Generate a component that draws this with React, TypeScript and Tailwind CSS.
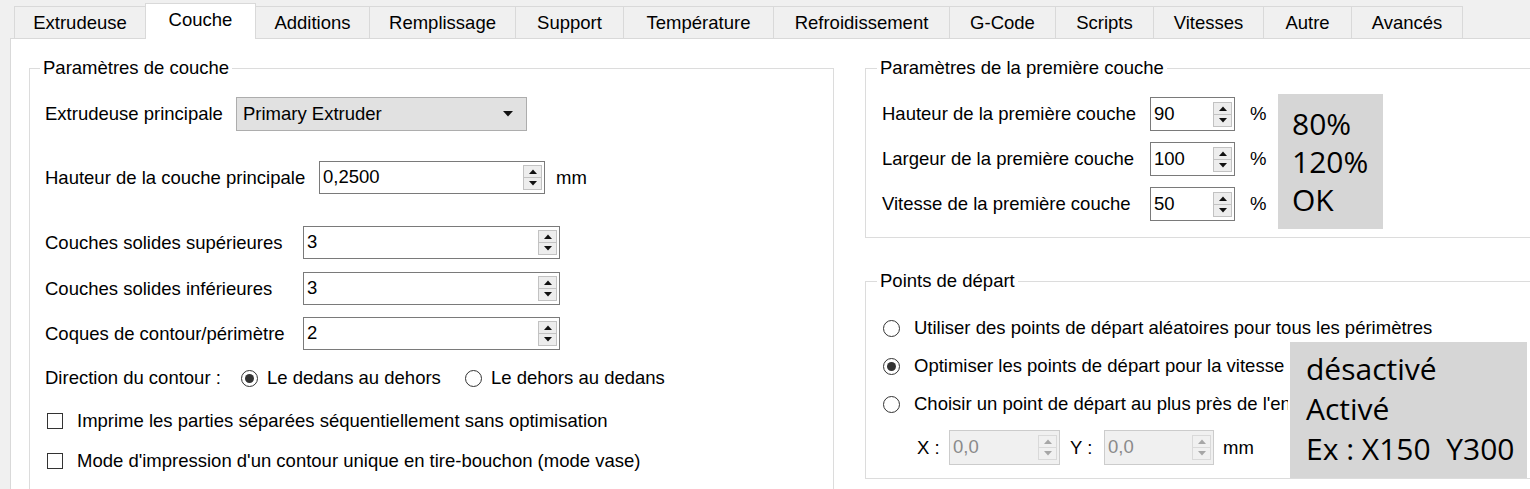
import React from "react";

const tabs: { label: string; w: string; active?: boolean }[] = [
  { label: "Extrudeuse", w: "w-[132px]" },
  { label: "Couche", w: "w-[111px]", active: true },
  { label: "Additions", w: "w-[115px]" },
  { label: "Remplissage", w: "w-[147px]" },
  { label: "Support", w: "w-[109px]" },
  { label: "Température", w: "w-[151px]" },
  { label: "Refroidissement", w: "w-[177px]" },
  { label: "G-Code", w: "w-[107px]" },
  { label: "Scripts", w: "w-[99px]" },
  { label: "Vitesses", w: "w-[111px]" },
  { label: "Autre", w: "w-[89px]" },
  { label: "Avancés", w: "w-[112px]" },
];

function UpArrow({ color }: { color: string }) {
  return (
    <svg width="8" height="5" viewBox="0 0 8 5">
      <path d="M0 5 L4 0.5 L8 5 Z" fill={color} />
    </svg>
  );
}

function DownArrow({ color }: { color: string }) {
  return (
    <svg width="8" height="5" viewBox="0 0 8 5">
      <path d="M0 0 L8 0 L4 4.5 Z" fill={color} />
    </svg>
  );
}

function Spin({
  w,
  h,
  value,
  disabled,
}: {
  w: string;
  h: string;
  value: string;
  disabled?: boolean;
}) {
  return (
    <div
      className={`${w} ${h} shrink-0 flex items-center border ${
        disabled
          ? "border-[#cccccc] bg-[#f0f0f0] text-[#8a8a8a]"
          : "border-[#7a7a7a] bg-white text-black"
      }`}
    >
      <span className="flex-1 pl-[3px] leading-none whitespace-nowrap">{value}</span>
      <div
        className={`w-[19px] h-[25px] mr-[2px] flex flex-col border ${
          disabled ? "border-[#d9d9d9] bg-[#f0f0f0]" : "border-[#c2c2c2] bg-[#ededed]"
        }`}
      >
        <div
          className={`flex-1 flex items-center justify-center border-b ${
            disabled ? "border-[#d9d9d9]" : "border-[#c2c2c2]"
          }`}
        >
          <UpArrow color={disabled ? "#a6a6a6" : "#111111"} />
        </div>
        <div className="flex-1 flex items-center justify-center">
          <DownArrow color={disabled ? "#a6a6a6" : "#111111"} />
        </div>
      </div>
    </div>
  );
}

function Radio({ checked }: { checked?: boolean }) {
  return (
    <span className="w-[17px] h-[17px] shrink-0 rounded-full border border-[#333333] bg-white flex items-center justify-center">
      {checked && <span className="w-[9px] h-[9px] rounded-full bg-[#333333]" />}
    </span>
  );
}

function Checkbox() {
  return <span className="w-[16px] h-[16px] shrink-0 border border-[#333333] bg-white" />;
}

export default function App() {
  return (
    <div className="relative w-[1530px] h-[489px] overflow-hidden bg-[#f0f0f0] text-black font-['Liberation_Sans',Arial,sans-serif] text-[18.5px]">
      {/* Tab bar */}
      <div className="flex items-end h-[38px] pl-[14px]">
        {tabs.map((t, i) => (
          <div
            key={t.label}
            className={`${t.w} shrink-0 flex items-center justify-center border-l border-t border-r border-[#d9d9d9] whitespace-nowrap ${
              i > 0 ? "-ml-px" : ""
            } ${
              t.active
                ? "relative z-10 h-[36px] -mb-px bg-white pb-[3px]"
                : "h-[32px] bg-[#f0f0f0]"
            }`}
          >
            {t.label}
          </div>
        ))}
      </div>

      {/* Pane */}
      <div className="ml-[10px] w-[1540px] h-[470px] bg-white border border-[#d9d9d9] flex items-start pt-[18px] pl-[18px]">
        {/* Left group */}
        <fieldset className="w-[805px] h-[480px] shrink-0 border border-[#dcdcdc]">
          <legend className="ml-[10px] px-[3px] leading-[22px]">Paramètres de couche</legend>
          <div className="flex flex-col pl-[15px]">
            <div className="mt-[18px] h-[34px] flex items-center">
              <span className="w-[191px] shrink-0 whitespace-nowrap">Extrudeuse principale</span>
              <div className="w-[291px] h-[34px] flex items-center justify-between bg-[#e1e1e1] border border-[#adadad] pl-[6px] pr-[13px]">
                <span className="whitespace-nowrap">Primary Extruder</span>
                <svg width="10" height="6" viewBox="0 0 10 6">
                  <path d="M0 0 L10 0 L5 5.5 Z" fill="#111111" />
                </svg>
              </div>
            </div>

            <div className="mt-[30px] h-[33px] flex items-center">
              <span className="w-[274px] shrink-0 whitespace-nowrap">Hauteur de la couche principale</span>
              <Spin w="w-[226px]" h="h-[33px]" value="0,2500" />
              <span className="ml-[11px]">mm</span>
            </div>

            <div className="mt-[32px] h-[33px] flex items-center">
              <span className="w-[258px] shrink-0 whitespace-nowrap">Couches solides supérieures</span>
              <Spin w="w-[257px]" h="h-[33px]" value="3" />
            </div>
            <div className="mt-[13px] h-[33px] flex items-center">
              <span className="w-[258px] shrink-0 whitespace-nowrap">Couches solides inférieures</span>
              <Spin w="w-[257px]" h="h-[33px]" value="3" />
            </div>
            <div className="mt-[12px] h-[33px] flex items-center">
              <span className="w-[258px] shrink-0 whitespace-nowrap">Coques de contour/périmètre</span>
              <Spin w="w-[257px]" h="h-[33px]" value="2" />
            </div>

            <div className="mt-[15px] h-[26px] flex items-center">
              <span className="w-[196px] shrink-0 whitespace-nowrap">Direction du contour :</span>
              <Radio checked />
              <span className="ml-[9px] w-[198px] shrink-0 whitespace-nowrap">Le dedans au dehors</span>
              <Radio />
              <span className="ml-[9px] whitespace-nowrap">Le dehors au dedans</span>
            </div>

            <div className="mt-[17px] h-[26px] flex items-center pl-[2px]">
              <Checkbox />
              <span className="ml-[14px] whitespace-nowrap">
                Imprime les parties séparées séquentiellement sans optimisation
              </span>
            </div>
            <div className="mt-[14px] h-[26px] flex items-center pl-[2px]">
              <Checkbox />
              <span className="ml-[14px] whitespace-nowrap">
                Mode d'impression d'un contour unique en tire-bouchon (mode vase)
              </span>
            </div>
          </div>
        </fieldset>

        {/* Right column */}
        <div className="ml-[31px] flex flex-col shrink-0">
          <fieldset className="w-[700px] border border-[#dcdcdc]">
            <legend className="ml-[11px] px-[3px] leading-[22px]">Paramètres de la première couche</legend>
            <div className="flex flex-col pl-[16px] pb-[16px]">
              {[
                ["Hauteur de la première couche", "90"],
                ["Largeur de la première couche", "100"],
                ["Vitesse de la première couche", "50"],
              ].map(([label, v], i) => (
                <div
                  key={label}
                  className={`${i === 0 ? "mt-[18px]" : "mt-[11px]"} h-[34px] flex items-center`}
                >
                  <span className="w-[268px] shrink-0 whitespace-nowrap">{label}</span>
                  <Spin w="w-[85px]" h="h-[34px]" value={v} />
                  <span className="ml-[15px]">%</span>
                </div>
              ))}
            </div>
          </fieldset>

          <fieldset className="mt-[32px] w-[700px] border border-[#dcdcdc]">
            <legend className="ml-[11px] px-[3px] leading-[22px]">Points de départ</legend>
            <div className="flex flex-col pl-[17px] pb-[13px]">
              <div className="mt-[23px] h-[26px] flex items-center">
                <Radio />
                <span className="ml-[14px] whitespace-nowrap">
                  Utiliser des points de départ aléatoires pour tous les périmètres
                </span>
              </div>
              <div className="mt-[12px] h-[26px] flex items-center">
                <Radio checked />
                <span className="ml-[14px] w-[374px] overflow-hidden whitespace-nowrap">
                  Optimiser les points de départ pour la vitesse
                </span>
              </div>
              <div className="mt-[12px] h-[26px] flex items-center">
                <Radio />
                <span className="ml-[14px] w-[374px] overflow-hidden whitespace-nowrap">
                  Choisir un point de départ au plus près de l'en
                </span>
              </div>
              <div className="mt-[13px] h-[35px] flex items-center pl-[34px]">
                <span className="w-[32px] shrink-0 whitespace-nowrap">X :</span>
                <Spin w="w-[111px]" h="h-[35px]" value="0,0" disabled />
                <span className="ml-[10px] w-[34px] shrink-0 whitespace-nowrap">Y :</span>
                <Spin w="w-[110px]" h="h-[35px]" value="0,0" disabled />
                <span className="ml-[9px]">mm</span>
              </div>
            </div>
          </fieldset>
        </div>
      </div>

      {/* Annotation overlays */}
      <div className="absolute left-[1278px] top-[94px] w-[105px] h-[135px] bg-[#d6d6d6] pl-[14px] pt-[11px] font-['Open_Sans',sans-serif] text-[30px] leading-[38px] text-black">
        <div>80%</div>
        <div>120%</div>
        <div>OK</div>
      </div>
      <div className="absolute left-[1290px] top-[342px] w-[237px] h-[136px] bg-[#d6d6d6] pl-[16px] pt-[7px] font-['Open_Sans',sans-serif] text-[30px] leading-[40px] text-black whitespace-nowrap">
        <div>désactivé</div>
        <div>Activé</div>
        <div>Ex : X150&nbsp; Y300</div>
      </div>
    </div>
  );
}
